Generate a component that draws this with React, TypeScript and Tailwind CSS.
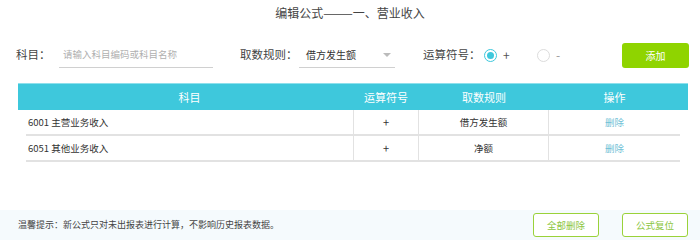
import React from "react";

const font = { fontFamily: '"Noto Sans CJK SC", "Noto Sans", sans-serif' };

function Radio({ checked }: { checked: boolean }) {
  return (
    <span
      className={`flex h-[13px] w-[13px] shrink-0 items-center justify-center rounded-full border ${
        checked ? "border-[#3ec8dc]" : "border-[#dcdcdc]"
      }`}
    >
      {checked && <span className="h-[7px] w-[7px] rounded-full bg-[#3ec8dc]" />}
    </span>
  );
}

const rows = [
  { name: "6001 主营业务收入", op: "+", rule: "借方发生额" },
  { name: "6051 其他业务收入", op: "+", rule: "净额" },
];

export default function App() {
  return (
    <div className="relative h-[250px] w-[700px] overflow-hidden bg-white text-[#333]" style={font}>
      <div className="flex h-[24px] items-center justify-center pt-[1px] text-[12px] text-[#444]">
        编辑公式———一、营业收入
      </div>

      <div className="mt-[18px] flex h-[26px] items-center whitespace-nowrap text-[11.5px]">
        <span className="ml-[16px] w-[43px] shrink-0 text-[#444]">科目：</span>
        <div className="flex h-[26px] w-[154px] shrink-0 items-center border-b border-[#d0d0d0] pl-[4px] text-[9.5px] text-[#b0b0b0]">
          请输入科目编码或科目名称
        </div>
        <span className="ml-[27px] w-[59px] shrink-0 text-[#444]">取数规则：</span>
        <div className="flex h-[26px] w-[96px] shrink-0 items-center justify-between border-b border-[#d0d0d0] pl-[7px] pr-[4px] text-[10px] text-[#333]">
          <span>借方发生额</span>
          <span className="h-0 w-0 border-x-[4px] border-t-[4px] border-x-transparent border-t-[#bbb]" />
        </div>
        <span className="ml-[28px] w-[61px] shrink-0 text-[#444]">运算符号：</span>
        <div className="flex w-[53px] shrink-0 items-center">
          <Radio checked />
          <span className="ml-[6px] text-[12px] text-[#555]">+</span>
        </div>
        <div className="flex w-[85px] shrink-0 items-center">
          <Radio checked={false} />
          <span className="ml-[6px] text-[12px] text-[#999]">-</span>
        </div>
        <button className="flex h-[25px] w-[67px] shrink-0 items-center justify-center rounded-[3px] bg-[#8fd400] text-[10px] text-white">
          添加
        </button>
      </div>

      <div className="mx-[18px] mt-[15px] w-[670px]">
        <div className="grid h-[27px] grid-cols-[327px_66px_130px_131px] items-center border-t border-[#8ee0ec] bg-[#3ec8dc] px-[8px] text-[11px] text-white">
          <div className="text-center">科目</div>
          <div className="text-center">运算符号</div>
          <div className="text-center">取数规则</div>
          <div className="text-center">操作</div>
        </div>
        <div className="mx-[8px]">
          {rows.map((r) => (
            <div
              key={r.name}
              className="grid h-[26px] grid-cols-[327px_66px_130px_131px] border-b-2 border-[#e2e2e2] text-[9.5px]"
            >
              <div className="flex items-center pl-[2px] text-[#333]">{r.name}</div>
              <div className="flex items-center justify-center border-x border-[#e2e2e2] text-[11px] text-[#333]">{r.op}</div>
              <div className="flex items-center justify-center border-r border-[#e2e2e2] text-[#333]">{r.rule}</div>
              <div className="flex items-center justify-center text-[#6fbfd6]">删除</div>
            </div>
          ))}
        </div>
      </div>

      <div className="absolute left-0 top-[210px] flex h-[30px] w-[700px] items-center bg-[#f5fafd]">
        <span className="ml-[18px] whitespace-nowrap text-[9px] text-[#444]">
          温馨提示：新公式只对未出报表进行计算，不影响历史报表数据。
        </span>
        <button className="ml-auto flex h-[24px] w-[66px] items-center justify-center rounded-[3px] border border-[#9ad23a] bg-white text-[9.5px] text-[#8cc63e]">
          全部删除
        </button>
        <button className="ml-[23px] mr-[12px] flex h-[24px] w-[66px] items-center justify-center rounded-[3px] border border-[#9ad23a] bg-white text-[9.5px] text-[#8cc63e]">
          公式复位
        </button>
      </div>
    </div>
  );
}
